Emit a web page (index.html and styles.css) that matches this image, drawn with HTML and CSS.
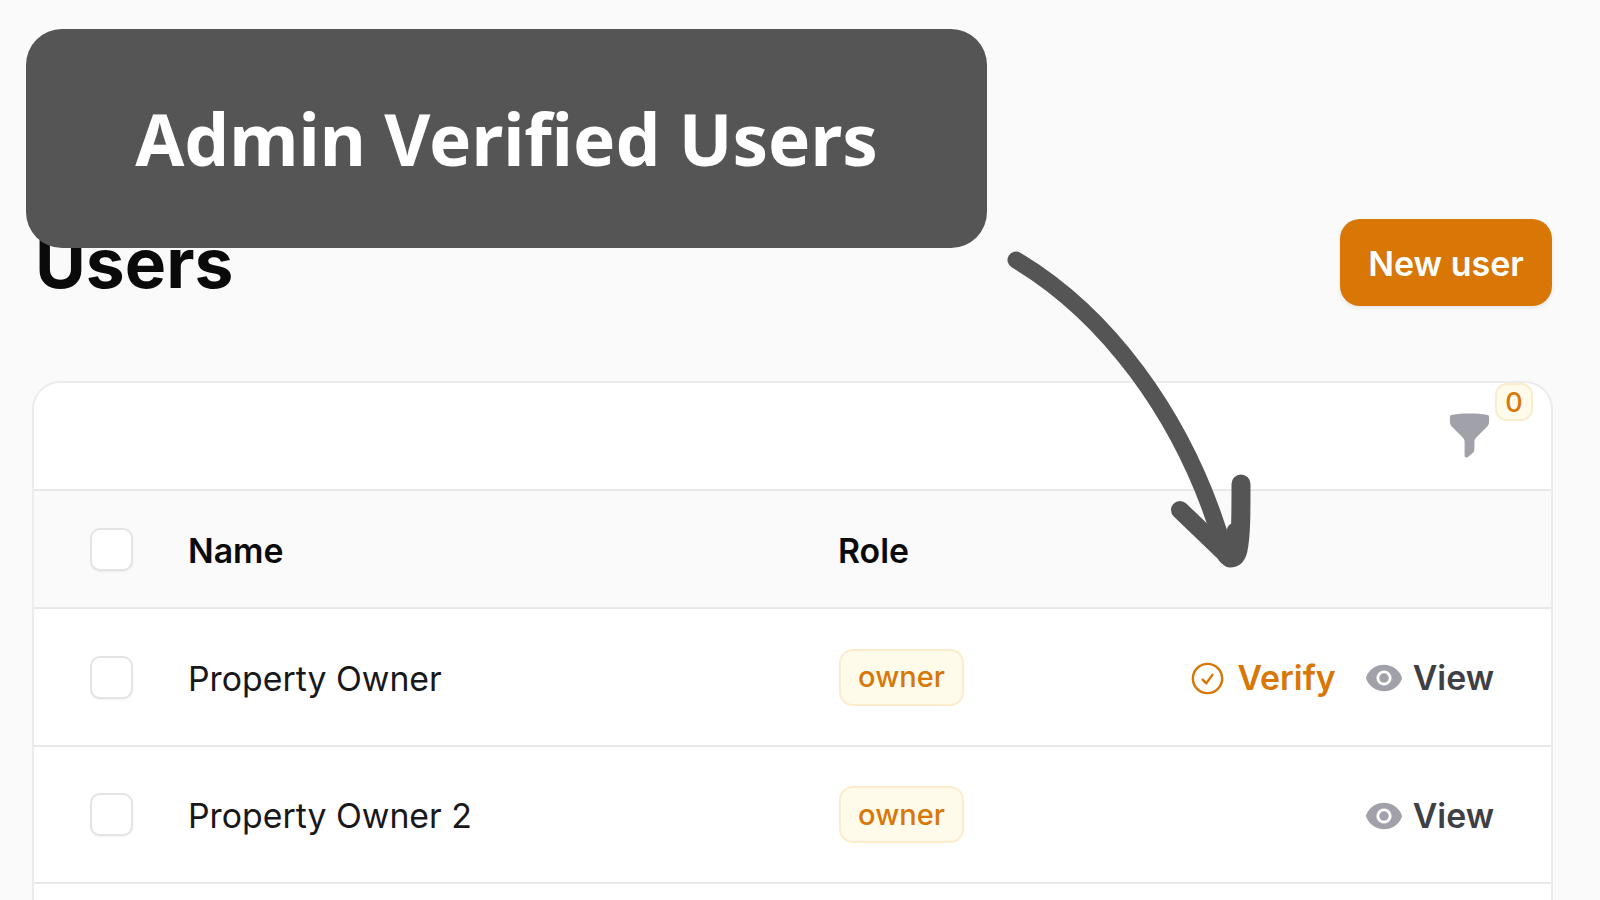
FILE: index.html
```html
<!DOCTYPE html>
<html lang="en">
<head>
<meta charset="utf-8">
<title>Users</title>
<link rel="stylesheet" href="styles.css">
</head>
<body>
<main class="page">
  <header class="page-head">
    <h1 class="title">Users</h1>
    <button class="primary">New user</button>
  </header>
  <section class="card">
    <div class="toolbar">
      <div class="filter">
        <svg class="filter-icon" viewBox="0 0 20 20" fill="currentColor"><path d="M2.628 1.601C5.028 1.206 7.49 1 10 1s4.973.206 7.372.601a.75.75 0 01.628.74v2.288a2.25 2.25 0 01-.659 1.59l-4.682 4.683a2.25 2.25 0 00-.659 1.59v3.037c0 .684-.31 1.33-.844 1.757l-1.937 1.55A.75.75 0 018 18.25v-5.757a2.25 2.25 0 00-.659-1.591L2.659 6.22A2.25 2.25 0 012 4.629V2.34a.75.75 0 01.628-.74z"/></svg>
        <span class="count">0</span>
      </div>
    </div>
    <div class="row head">
      <div class="cell-check"><span class="check"></span></div>
      <div class="label">Name</div>
      <div class="label">Role</div>
    </div>
    <div class="row">
      <div class="cell-check"><span class="check"></span></div>
      <div class="label">Property Owner</div>
      <div><span class="badge">owner</span></div>
      <div class="actions">
        <a class="action verify">
          <svg class="act-icon" viewBox="0 0 24 24" fill="none" stroke="currentColor" stroke-width="1.5" stroke-linecap="round" stroke-linejoin="round"><path d="M9 12.75L11.25 15 15 9.75M21 12a9 9 0 11-18 0 9 9 0 0118 0z"/></svg>
          Verify
        </a>
        <a class="action view">
          <svg class="act-icon eye" viewBox="0 0 20 20" fill="currentColor"><path d="M10 12.5a2.5 2.5 0 100-5 2.5 2.5 0 000 5z"/><path fill-rule="evenodd" d="M.664 10.59a1.651 1.651 0 010-1.186A10.004 10.004 0 0110 3c4.257 0 7.893 2.66 9.336 6.41.147.381.146.804 0 1.186A10.004 10.004 0 0110 17c-4.257 0-7.893-2.66-9.336-6.41zM14 10a4 4 0 11-8 0 4 4 0 018 0z"/></svg>
          View
        </a>
      </div>
    </div>
    <div class="row">
      <div class="cell-check"><span class="check"></span></div>
      <div class="label">Property Owner 2</div>
      <div><span class="badge">owner</span></div>
      <div class="actions">
        <a class="action view">
          <svg class="act-icon eye" viewBox="0 0 20 20" fill="currentColor"><path d="M10 12.5a2.5 2.5 0 100-5 2.5 2.5 0 000 5z"/><path fill-rule="evenodd" d="M.664 10.59a1.651 1.651 0 010-1.186A10.004 10.004 0 0110 3c4.257 0 7.893 2.66 9.336 6.41.147.381.146.804 0 1.186A10.004 10.004 0 0110 17c-4.257 0-7.893-2.66-9.336-6.41zM14 10a4 4 0 11-8 0 4 4 0 018 0z"/></svg>
          View
        </a>
      </div>
    </div>
    <div class="row"></div>
  </section>
</main>
<div class="banner">Admin Verified Users</div>
<svg class="arrow" viewBox="0 0 1600 900" fill="none" stroke="#555555" stroke-linecap="round" stroke-linejoin="round">
  <path stroke-width="17" d="M1016 260C1100 310 1185 410 1226 556"/>
  <path stroke-width="19" d="M1241 484C1241 515 1241 535 1238 550C1236 558 1233 558 1230 558"/>
  <path stroke-width="18" d="M1180 510L1230 558"/>
  <path stroke-width="14" d="M1234 530L1232 555"/>
</svg>
</body>
</html>
```
FILE: styles.css
```css
* { box-sizing: border-box; }
html, body { margin: 0; height: 100%; }
body {
  background: #fafafa;
  font-family: Inter, "Liberation Sans", sans-serif;
  color: #18181b;
  overflow: hidden;
  position: relative;
}
.page { padding: 218px 47px 0 32px; }
.page-head {
  display: flex;
  justify-content: space-between;
  align-items: center;
  height: 88px;
}
.title {
  margin: 0 0 0 3px;
  padding-top: 3px;
  font-size: 69.5px;
  line-height: 85px;
  font-weight: 700;
  letter-spacing: 0;
  color: #0a0a0a;
}
.primary {
  width: 212px;
  height: 87px;
  margin-right: 1px;
  padding: 2px 0 0;
  border: 0;
  border-radius: 20px;
  background: #d97706;
  color: #fff;
  font: 600 34px Inter, sans-serif;
  box-shadow: 0 2px 4px rgba(0, 0, 0, .08);
}
.card {
  margin-top: 75px;
  background: #fff;
  border: 2px solid #ececed;
  border-bottom: 0;
  border-radius: 28px 28px 0 0;
}
.toolbar {
  height: 106px;
  display: flex;
  justify-content: flex-end;
}
.filter {
  position: relative;
  width: 100%;
  display: flex;
  justify-content: flex-end;
  padding: 28px 57px 0 0;
}
.filter-icon { width: 49px; height: 49px; color: #a1a1aa; }
.count {
  position: absolute;
  top: 0;
  right: 18px;
  width: 38px;
  height: 38px;
  display: flex;
  align-items: center;
  justify-content: center;
  background: #fffbeb;
  border: 2px solid #fdeccc;
  border-radius: 12px;
  color: #d97706;
  font-size: 27px;
  font-weight: 500;
}
.row {
  display: grid;
  grid-template-columns: 154px 650px 1fr auto;
  align-items: center;
  height: 137.5px;
  padding-top: 1px;
  border-top: 2px solid #e8e8e9;
  font-size: 33.8px;
  line-height: 40px;
  color: #18181b;
}
.row.head {
  height: 118px;
  padding-top: 0;
  background: #fafafa;
  font-weight: 600;
  color: #0a0a0a;
}
.label { padding-top: 3px; }
.cell-check { padding-left: 56px; display: flex; }
.check {
  width: 43px;
  height: 43px;
  background: #fff;
  border: 2px solid #e4e4e7;
  border-radius: 10px;
  box-shadow: 0 1px 2px rgba(0, 0, 0, .06);
}
.badge {
  display: inline-flex;
  align-items: center;
  justify-content: center;
  width: 125px;
  height: 57px;
  margin-left: 1px;
  background: #fffbeb;
  border: 2px solid #fdeccc;
  border-radius: 14px;
  color: #d97706;
  font-size: 29px;
  font-weight: 500;
}
.actions {
  grid-column: 4;
  display: flex;
  align-items: center;
  gap: 29px;
  padding-right: 57px;
  padding-top: 2px;
}
.action {
  display: flex;
  align-items: center;
  gap: 10px;
  font-weight: 600;
}
.act-icon { width: 38px; height: 38px; }
.verify { color: #d97706; }
.verify .act-icon { width: 39px; height: 39px; }
.view { color: #3f3f46; }
.eye { color: #a1a1aa; }
.banner {
  position: absolute;
  left: 26px;
  top: 29px;
  width: 961px;
  height: 219px;
  display: flex;
  align-items: center;
  justify-content: center;
  background: #555555;
  border-radius: 36px;
  color: #fff;
  font-family: "Noto Sans", sans-serif;
  font-size: 71px;
  font-weight: 700;
}
.arrow {
  position: absolute;
  inset: 0;
  width: 1600px;
  height: 900px;
  pointer-events: none;
}
```
